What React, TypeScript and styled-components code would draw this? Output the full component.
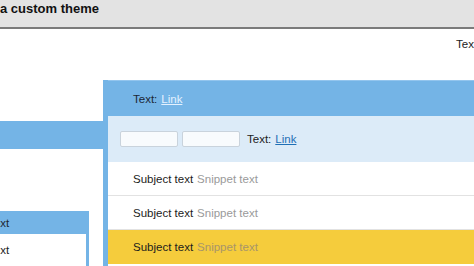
import React from "react";
import styled, { createGlobalStyle } from "styled-components";

const Global = createGlobalStyle`
  html, body { margin: 0; padding: 0; background: #fff; overflow: hidden; }
  body { font-family: "Liberation Sans", Arial, Helvetica, sans-serif; width: 474px; height: 266px; }
`;

const Page = styled.div`
  width: 474px;
  height: 266px;
  overflow: hidden;
  display: flex;
  flex-direction: column;
`;

const TitleBar = styled.div`
  flex-shrink: 0;
  height: 29px;
  background: #e3e3e3;
  border-bottom: 2px solid #7b7b7b;
  box-sizing: border-box;
  display: flex;
  align-items: flex-start;
  padding-top: 1px;
`;

const Title = styled.h1`
  margin: 0;
  font-size: 13px;
  font-weight: bold;
  color: #111;
  line-height: 16px;
  white-space: nowrap;
`;

const TopRow = styled.div`
  flex-shrink: 0;
  height: 51px;
  padding-left: 456px;
  white-space: nowrap;
  overflow: hidden;
  font-size: 11.5px;
  color: #222;
  line-height: 14px;
  padding-top: 8px;
  box-sizing: border-box;
`;

const Main = styled.div`
  display: flex;
  flex: 1;
  min-height: 0;
`;

const LeftCol = styled.div`
  width: 103px;
  flex-shrink: 0;
  display: flex;
  flex-direction: column;
  padding-top: 41px;
  box-sizing: border-box;
`;

const BlueBar = styled.div`
  flex-shrink: 0;
  height: 28px;
  background: #74b4e6;
`;

const MiniPanel = styled.div`
  margin-top: 62px;
  width: 89px;
  display: flex;
  flex-direction: column;
  flex: 1;
`;

const MiniHeader = styled.div`
  flex-shrink: 0;
  height: 23px;
  background: #74b4e6;
  display: flex;
  align-items: center;
  overflow: hidden;
  font-size: 11.5px;
  color: #1d2733;
`;

const MiniBody = styled.div`
  flex: 1;
  border-right: 3px solid #74b4e6;
  overflow: hidden;
`;

const MiniRow = styled.div`
  height: 32px;
  display: flex;
  align-items: center;
  font-size: 11.5px;
  color: #222;
  white-space: nowrap;
  overflow: hidden;
`;

const MiniText = styled.span`
  margin-left: -12px;
  white-space: nowrap;
`;

const Panel = styled.div`
  flex: 1;
  border-left: 5px solid #74b4e6;
  display: flex;
  flex-direction: column;
`;

const Header = styled.div`
  flex-shrink: 0;
  height: 36px;
  background: #74b4e6;
  border-top: 1px solid #93c5ee;
  box-sizing: border-box;
  display: flex;
  align-items: center;
  padding-left: 25px;
  font-size: 11.5px;
  color: #1b2735;
`;

const HeaderLink = styled.a`
  color: #e3f1ff;
  text-decoration: underline;
  margin-left: 4px;
`;

const Toolbar = styled.div`
  flex-shrink: 0;
  height: 46px;
  background: #dcebf8;
  display: flex;
  align-items: center;
  padding-left: 12px;
  gap: 4px;
  font-size: 11.5px;
  color: #222;
  box-sizing: border-box;
`;

const Input = styled.div`
  width: 58px;
  height: 16px;
  background: #f8fbfd;
  border: 1px solid #c9d3dc;
  border-radius: 2px;
  box-sizing: border-box;
`;

const ToolText = styled.span`
  margin-left: 3px;
`;

const ToolLink = styled.a`
  color: #1f6fb5;
  text-decoration: underline;
  margin-left: 4px;
`;

const Row = styled.div<{ $selected?: boolean }>`
  flex-shrink: 0;
  height: 34px;
  box-sizing: border-box;
  border-bottom: 1px solid ${(p) => (p.$selected ? "#f5cc3c" : "#e2e2e2")};
  background: ${(p) => (p.$selected ? "#f5cc3c" : "#fff")};
  display: flex;
  align-items: center;
  padding-left: 25px;
  font-size: 11.5px;
  white-space: nowrap;
`;

const Subject = styled.span`
  color: #1c1c1c;
`;

const Snippet = styled.span<{ $selected?: boolean }>`
  color: ${(p) => (p.$selected ? "#a8956a" : "#9a9a9a")};
  margin-left: 4px;
`;

export default function App() {
  return (
    <Page>
      <Global />
      <TitleBar>
        <Title>a custom theme</Title>
      </TitleBar>
      <TopRow>Text: Link</TopRow>
      <Main>
        <LeftCol>
          <BlueBar />
          <MiniPanel>
            <MiniHeader>
              <MiniText>Text</MiniText>
            </MiniHeader>
            <MiniBody>
              <MiniRow>
                <MiniText>Text</MiniText>
              </MiniRow>
            </MiniBody>
          </MiniPanel>
        </LeftCol>
        <Panel>
          <Header>
            Text:<HeaderLink href="#">Link</HeaderLink>
          </Header>
          <Toolbar>
            <Input />
            <Input />
            <ToolText>
              Text:<ToolLink href="#">Link</ToolLink>
            </ToolText>
          </Toolbar>
          <Row>
            <Subject>Subject text</Subject>
            <Snippet>Snippet text</Snippet>
          </Row>
          <Row>
            <Subject>Subject text</Subject>
            <Snippet>Snippet text</Snippet>
          </Row>
          <Row $selected>
            <Subject>Subject text</Subject>
            <Snippet $selected>Snippet text</Snippet>
          </Row>
          <Row>
            <Subject>Subject text</Subject>
            <Snippet>Snippet text</Snippet>
          </Row>
        </Panel>
      </Main>
    </Page>
  );
}
